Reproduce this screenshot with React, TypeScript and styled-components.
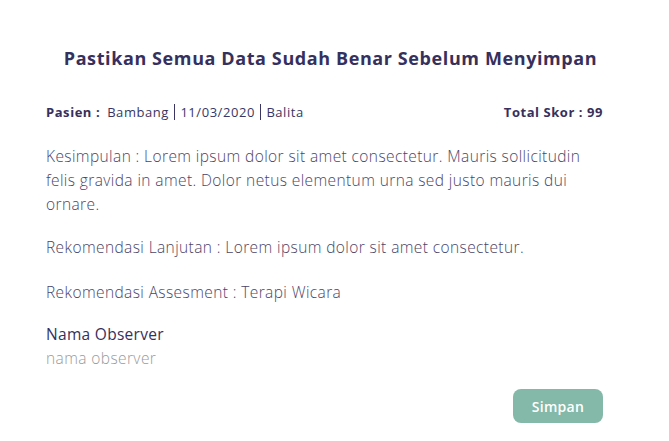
import React from "react";
import styled, { createGlobalStyle } from "styled-components";

const Global = createGlobalStyle`
  html, body { margin: 0; padding: 0; background: #ffffff; }
  body { font-family: "Open Sans", "Lato", sans-serif; }
`;

const Card = styled.div`
  width: 669px;
  height: 441px;
  box-sizing: border-box;
  padding: 45px 66px 0 46px;
  display: flex;
  flex-direction: column;
  color: #3b3563;
`;

const Title = styled.h1`
  margin: 0;
  font-size: 18px;
  font-weight: 700;
  letter-spacing: 0.6px;
  text-align: center;
  color: #36305d;
  line-height: 26px;
  padding-left: 12px;
`;

const InfoRow = styled.div`
  margin-top: 32px;
  display: flex;
  justify-content: space-between;
  align-items: center;
  font-size: 13px;
  letter-spacing: 0.55px;
  line-height: 18px;
`;

const Label = styled.span`
  font-weight: 700;
  color: #36305d;
`;

const Value = styled.span`
  font-weight: 400;
  color: #3b3563;
  margin-left: 7px;
`;

const Sep = styled.span`
  display: inline-block;
  width: 1.5px;
  height: 16px;
  background: #3b3563;
  margin: 0 5px;
  vertical-align: -3px;
`;

const Para = styled.p<{ $gap: number }>`
  margin: ${(p) => p.$gap}px 0 0 0;
  font-size: 15.5px;
  font-weight: 300;
  letter-spacing: 0.4px;
  line-height: 24px;
  color: #4a4568;
`;

const ObserverLabel = styled.div`
  margin-top: 18px;
  font-size: 15.5px;
  font-weight: 400;
  letter-spacing: 0.3px;
  line-height: 24px;
  color: #36305d;
`;

const ObserverValue = styled.div`
  font-size: 15.5px;
  font-weight: 300;
  letter-spacing: 0.4px;
  line-height: 24px;
  color: #9a9a9a;
`;

const Footer = styled.div`
  display: flex;
  justify-content: flex-end;
  margin-top: 19px;
`;

const Button = styled.button`
  width: 90px;
  height: 34px;
  border: none;
  border-radius: 8px;
  background: #84b9a9;
  color: #ffffff;
  font-family: inherit;
  font-size: 14px;
  font-weight: 600;
  letter-spacing: 0.3px;
  cursor: pointer;
`;

export default function App() {
  return (
    <>
      <Global />
      <Card>
        <Title>Pastikan Semua Data Sudah Benar Sebelum Menyimpan</Title>
        <InfoRow>
          <div>
            <Label>Pasien :</Label>
            <Value>Bambang</Value>
            <Sep />
            <span>11/03/2020</span>
            <Sep />
            <span>Balita</span>
          </div>
          <Label>Total Skor : 99</Label>
        </InfoRow>
        <Para $gap={23}>
          Kesimpulan : Lorem ipsum dolor sit amet consectetur. Mauris sollicitudin felis gravida in amet. Dolor netus elementum urna sed justo mauris dui ornare.
        </Para>
        <Para $gap={19}>Rekomendasi Lanjutan : Lorem ipsum dolor sit amet consectetur.</Para>
        <Para $gap={21}>Rekomendasi Assesment : Terapi Wicara</Para>
        <ObserverLabel>Nama Observer</ObserverLabel>
        <ObserverValue>nama observer</ObserverValue>
        <Footer>
          <Button>Simpan</Button>
        </Footer>
      </Card>
    </>
  );
}
